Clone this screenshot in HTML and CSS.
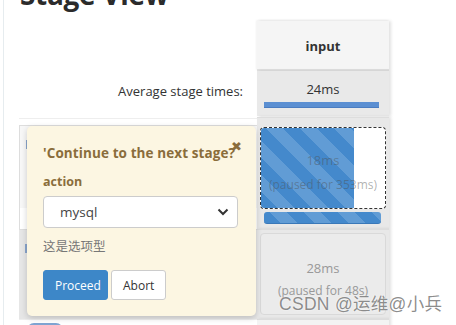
FILE: index.html
```html
<!DOCTYPE html>
<html lang="zh">
<head>
  <meta charset="UTF-8">
  <title>Stage View</title>
  <link rel="stylesheet" href="styles.css">
</head>
<body>
  <div class="page">
    <h1 class="title">Stage View</h1>
    <div class="stage-view">
      <div class="corner"></div>
      <div class="col-head">input</div>

      <div class="avg-label">Average stage times:</div>
      <div class="avg-cell">
        <span>24ms</span>
        <div class="avg-bar"></div>
      </div>

      <div class="build-row first"><span class="badge-mark"></span></div>
      <div class="stage-cell">
        <div class="paused-box">
          <div class="paused-fill"></div>
          <div class="time">18ms</div>
          <div class="paused">(paused for 353ms)</div>
        </div>
        <div class="run-bar"></div>
      </div>

      <div class="build-row second"><span class="badge-mark"></span></div>
      <div class="stage-cell">
        <div class="done-box">
          <div class="time">28ms</div>
          <div class="paused">(paused for 48s)</div>
        </div>
      </div>

      <div class="build-row third"><span class="build-pill"></span></div>
      <div class="stage-cell last"></div>
    </div>

    <!-- input prompt popover -->
    <div class="prompt">
      <span class="close">&#10006;</span>
      <div class="prompt-title">'Continue to the next stage?</div>
      <div class="field-label">action</div>
      <div class="select">
        <span>mysql</span>
        <svg width="12" height="8" viewBox="0 0 12 8"><path d="M1.5 1.5 L6 6 L10.5 1.5" fill="none" stroke="#333" stroke-width="2"/></svg>
      </div>
      <div class="hint">这是选项型</div>
      <div class="actions">
        <button class="btn btn-primary">Proceed</button>
        <button class="btn">Abort</button>
      </div>
    </div>

    <div class="watermark">CSDN @运维@小兵</div>
  </div>
</body>
</html>
```

FILE: styles.css
```css
body {
  margin: 0;
  background: #fff;
  font-family: "Open Sans", "Noto Sans CJK SC", sans-serif;
  color: #333;
  overflow: hidden;
}
.page {
  display: flow-root;
  position: relative;
  height: 325px;
  overflow: hidden;
  border-left: 1px solid #e6ecef;
  margin-left: 3px;
  padding-left: 15px;
}
.title {
  margin: -25px 0 0 1px;
  font-size: 28px;
  font-weight: bold;
  color: #2b2b2b;
  line-height: 38px;
  letter-spacing: -0.3px;
}
.stage-view {
  display: grid;
  grid-template-columns: 238px 132px;
  margin-top: 8px;
}
.corner {
  height: 50px;
}
.col-head {
  height: 50px;
  background: #f5f5f5;
  display: flex;
  align-items: center;
  justify-content: center;
  font-weight: bold;
  font-size: 13px;
  padding-top: 2px;
  box-sizing: border-box;
  border-bottom: 2px solid #e0e0e0;
  box-shadow: 2px 0 3px rgba(0, 0, 0, 0.12), -1px -1px 2px rgba(0, 0, 0, 0.05);
}
.avg-label {
  text-align: right;
  padding-right: 14px;
  font-size: 13px;
  padding-top: 11px;
  height: 36px;
  border-bottom: 1px solid #eee;
}
.avg-cell {
  height: 45px;
  background: #e9e9e9;
  font-size: 13px;
  text-align: center;
  padding-top: 9px;
  box-sizing: border-box;
  box-shadow: 2px 0 3px rgba(0, 0, 0, 0.12);
}
.avg-bar {
  height: 5px;
  margin: 4px 10px 0 7px;
  background: #5b8fd2;
  border-bottom: 1px solid #4a7cc0;
}
.build-row {
  position: relative;
  border-top: 1px solid #ddd;
  box-sizing: border-box;
}
.build-row.first {
  height: 104px;
  margin-top: 6px;
  background: linear-gradient(#f7f7f7 0, #f7f7f7 82px, #fff 82px);
  border-left: 1px solid #ddd;
}
.build-row.second {
  height: 90px;
  background: #e6e6e6;
}
.build-row.third {
  height: 20px;
  background: #fff;
  border-top: 1px solid #eee;
}
.badge-mark {
  position: absolute;
  left: 6px;
  top: 14px;
  width: 3px;
  height: 9px;
  background: #8aa5cc;
}
.build-pill {
  display: block;
  width: 36px;
  height: 14px;
  margin: 3px 0 0 8px;
  border-radius: 7px;
  background: #7fa4d2;
}
.stage-cell {
  background: #e8e8e8;
  box-shadow: 2px 0 3px rgba(0, 0, 0, 0.12);
  padding: 0 3px;
  border-top: 1px solid #ddd;
}
.stage-cell:nth-child(6) {
  height: 112px;
  padding-top: 9px;
  box-sizing: border-box;
  margin-top: -2px;
}
.stage-cell:nth-child(8) {
  height: 90px;
  padding-top: 3px;
  box-sizing: border-box;
}
.stage-cell.last {
  height: 20px;
  background: #f3f3f3;
}
.paused-box {
  position: relative;
  height: 82px;
  border: 1px dashed #333;
  border-radius: 4px;
  background: #fff;
  overflow: hidden;
  text-align: center;
  box-sizing: border-box;
}
.paused-fill {
  position: absolute;
  left: 0;
  top: 0;
  bottom: 0;
  width: 93px;
  background: repeating-linear-gradient(45deg, #4489cc 0, #4489cc 12px, #619cd5 12px, #619cd5 24px);
}
.run-bar {
  height: 11px;
  margin: 3px 5px 0 4px;
  border-radius: 3px;
  border-bottom: 1px solid #3a78b8;
  background: repeating-linear-gradient(45deg, #4489cc 0, #4489cc 12px, #619cd5 12px, #619cd5 24px);
}
.time,
.paused {
  position: relative;
  color: rgba(80, 80, 80, 0.45);
  font-size: 12px;
}
.paused-box .time {
  padding-top: 23px;
  font-size: 13px;
}
.paused-box .paused {
  margin-top: 7px;
  font-size: 12px;
}
.done-box {
  height: 82px;
  background: #ebebeb;
  border: 1px solid #d9d9d9;
  border-radius: 4px;
  box-sizing: border-box;
  text-align: center;
}
.done-box .time {
  padding-top: 25px;
  font-size: 13px;
  color: #999;
}
.done-box .paused {
  margin-top: 5px;
  color: #999;
}
.prompt {
  position: absolute;
  left: 23px;
  top: 126px;
  width: 229px;
  height: 190px;
  background: #fcf6e2;
  border-radius: 5px;
  box-shadow: 0 2px 6px rgba(0, 0, 0, 0.18);
  padding: 16px 15px 0 16px;
  box-sizing: border-box;
  color: #8a6d3b;
}
.close {
  position: absolute;
  right: 14px;
  top: 11px;
  font-size: 13px;
  color: #8a6d3b;
}
.prompt-title {
  font-weight: bold;
  font-size: 13.5px;
  line-height: 22px;
  letter-spacing: 0.1px;
}
.field-label {
  font-weight: bold;
  font-size: 12.5px;
  margin-top: 9px;
}
.select {
  margin-top: 6px;
  height: 32px;
  width: 195px;
  background: #fff;
  border: 1px solid #ccc;
  border-radius: 4px;
  box-sizing: border-box;
  display: flex;
  align-items: center;
  justify-content: space-between;
  padding: 0 8px 0 16px;
  font-size: 13.5px;
  color: #444;
}
.hint {
  margin-top: 8px;
  font-size: 12.5px;
  color: #777;
}
.actions {
  display: flex;
  gap: 3px;
  margin-top: 15px;
}
.btn {
  height: 30px;
  padding: 0 11px;
  font-family: "Open Sans", sans-serif;
  font-size: 12px;
  border: 1px solid #ccc;
  border-radius: 3px;
  background: #fff;
  color: #333;
}
.btn-primary {
  width: 65px;
  background: #3d87c8;
  border-color: #3d87c8;
  color: #fff;
}
.watermark {
  position: absolute;
  left: 275px;
  top: 290px;
  font-family: "Liberation Sans", "Noto Sans CJK SC", sans-serif;
  font-size: 17.5px;
  color: rgba(120, 120, 120, 0.85);
  text-shadow: 0 0 2px #fff;
  letter-spacing: 0.3px;
}
```
